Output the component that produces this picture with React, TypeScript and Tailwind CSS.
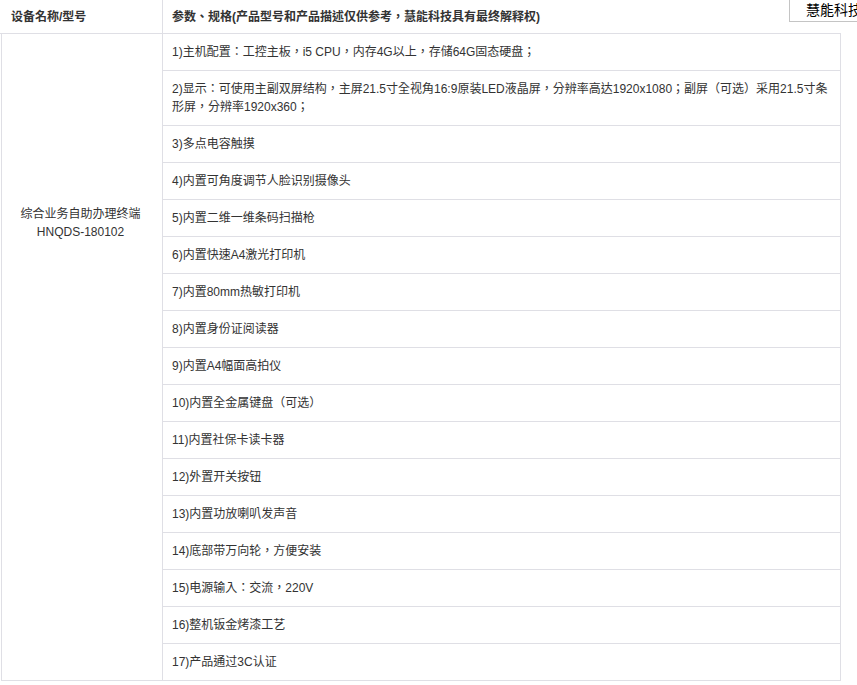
import React from "react";

const items = [
  "1)主机配置：工控主板，i5 CPU，内存4G以上，存储64G固态硬盘；",
  "2)显示：可使用主副双屏结构，主屏21.5寸全视角16:9原装LED液晶屏，分辨率高达1920x1080；副屏（可选）采用21.5寸条形屏，分辨率1920x360；",
  "3)多点电容触摸",
  "4)内置可角度调节人脸识别摄像头",
  "5)内置二维一维条码扫描枪",
  "6)内置快速A4激光打印机",
  "7)内置80mm热敏打印机",
  "8)内置身份证阅读器",
  "9)内置A4幅面高拍仪",
  "10)内置全金属键盘（可选）",
  "11)内置社保卡读卡器",
  "12)外置开关按钮",
  "13)内置功放喇叭发声音",
  "14)底部带万向轮，方便安装",
  "15)电源输入：交流，220V",
  "16)整机钣金烤漆工艺",
  "17)产品通过3C认证",
];

export default function App() {
  return (
    <div
      className="relative w-[857px] h-[685px] overflow-hidden bg-white text-[12px] leading-[18px] text-[#333]"
      style={{ fontFamily: '"Liberation Sans", Arial, "Noto Sans CJK TC", "Noto Sans CJK SC", sans-serif' }}
    >
      <div className="flex w-[841px] h-[34px] border-b border-[#dfdfe5] font-bold">
        <div className="w-[163px] border-r border-[#dfdfe5] pl-[11px] flex items-center">设备名称/型号</div>
        <div className="flex-1 pl-[9px] flex items-center">参数、规格(产品型号和产品描述仅供参考，慧能科技具有最终解释权)</div>
      </div>
      <div className="ml-px w-[840px] flex border-x border-b border-[#dfdfe5]">
        <div className="w-[161px] border-r border-[#dfdfe5] pt-[171px] pr-[3px] text-center">
          综合业务自助办理终端
          <br />
          HNQDS-180102
        </div>
        <div className="flex-1 flex flex-col">
          {items.map((t, i) => (
            <div
              key={i}
              className={
                "py-[9px] pl-[9px] pr-[8px] " +
                (i < items.length - 1 ? "border-b border-[#dfdfe5]" : "")
              }
            >
              {t}
            </div>
          ))}
        </div>
      </div>
      <div className="absolute left-[789px] top-[-1px] h-[23px] w-[90px] border border-[#c4c4c4] bg-white pl-[16px] text-[14px] leading-[21px] text-black">
        慧能科技
      </div>
    </div>
  );
}
